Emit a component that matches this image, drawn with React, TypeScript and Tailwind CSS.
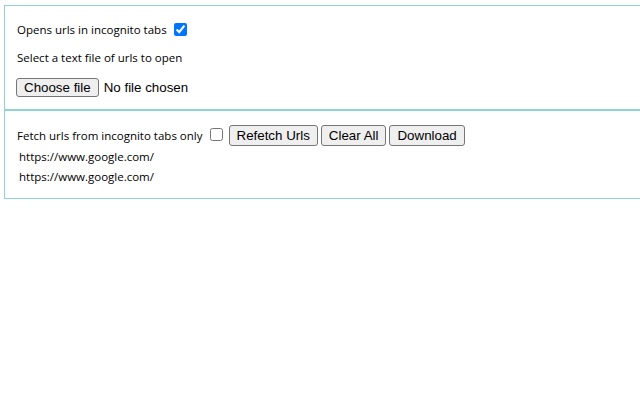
import React from "react";

const ui = { fontFamily: '"Open Sans", "Noto Sans", sans-serif' };
const arial = { fontFamily: '"Liberation Sans", Arial, sans-serif' };

function Btn({ children }: { children: React.ReactNode }) {
  return (
    <button
      type="button"
      style={arial}
      className="h-[21px] px-[7px] border border-[#767676] rounded-[3px] bg-[#efefef] text-[13.33px] leading-[15px] text-black"
    >
      {children}
    </button>
  );
}

export default function App() {
  const urls = ["https://www.google.com/", "https://www.google.com/"];
  return (
    <div className="w-[640px] h-[400px] overflow-hidden bg-white text-black" style={ui}>
      <div className="pt-[5px] pl-[4px] w-[700px]">
        <div className="border border-[#8fd4d0] pl-[12px] pt-[15px] pb-[12px]">
          <div className="flex items-center h-[18px] text-[11.5px]">
            <span>Opens urls in incognito tabs</span>
            <input type="checkbox" defaultChecked className="ml-[7px] w-[13px] h-[13px] accent-[#0075ff] -mt-[2px]" />
          </div>
          <div className="flex items-center h-[18px] mt-[10px] text-[11.5px]">Select a text file of urls to open</div>
          <label className="flex items-center mt-[11px] h-[19px] -ml-[1px]" style={arial}>
            <input type="file" className="hidden" />
            <span className="h-[19px] flex items-center px-[7px] border border-[#767676] rounded-[3px] bg-[#efefef] text-[13.33px]">
              Choose file
            </span>
            <span className="ml-[5px] text-[13.33px]">No file chosen</span>
          </label>
        </div>
        <div className="border border-[#8fd4d0] pl-[12px] pt-[14px] pb-[11px]">
          <div className="flex items-center h-[21px] gap-[3px]">
            <span className="text-[11.5px]">Fetch urls from incognito tabs only</span>
            <input type="checkbox" className="ml-[4px] mr-[3px] w-[13px] h-[13px] -mt-[2px]" />
            <Btn>Refetch Urls</Btn>
            <Btn>Clear All</Btn>
            <Btn>Download</Btn>
          </div>
          <div className="pl-[2px] mt-[1px] text-[11.5px]">
            {urls.map((u, i) => (
              <div key={i} className="h-[20px] flex items-center">{u}</div>
            ))}
          </div>
        </div>
      </div>
    </div>
  );
}
